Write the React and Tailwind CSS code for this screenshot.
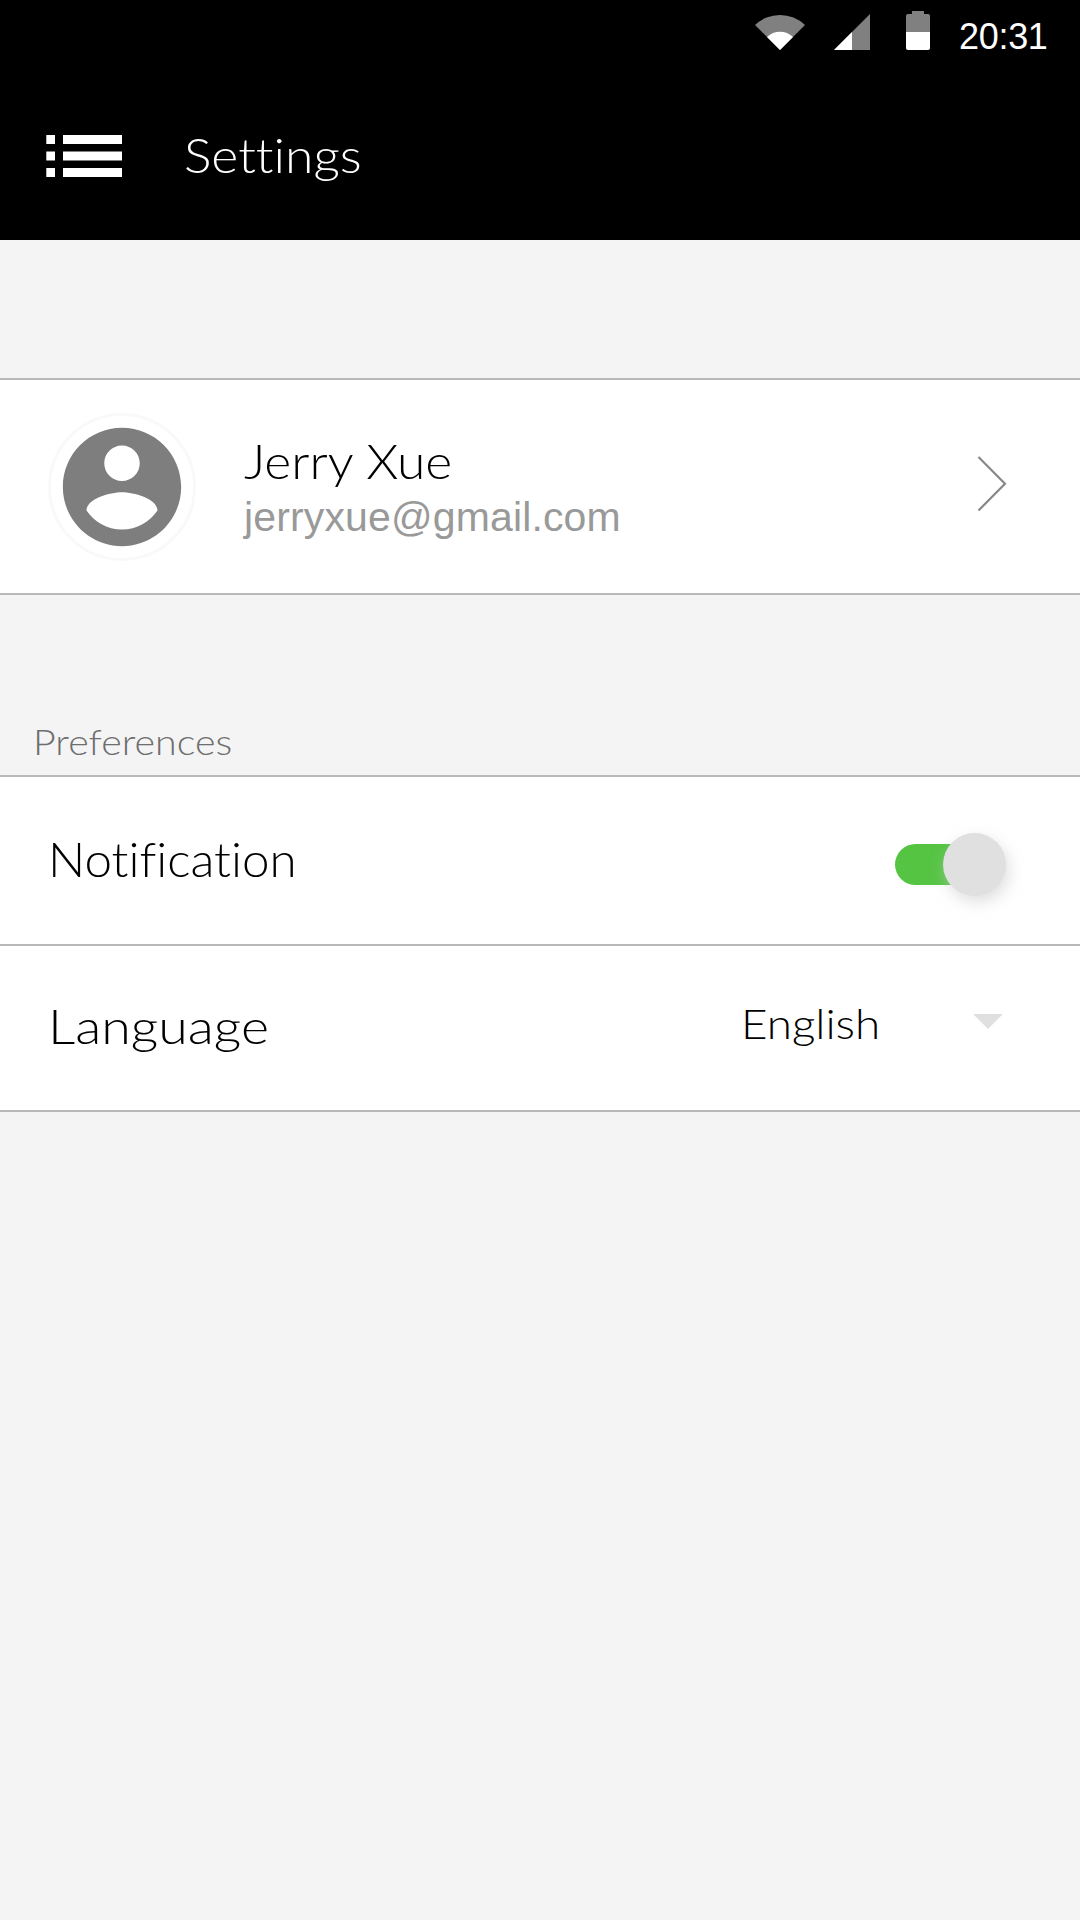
import React from "react";

function StatusBar() {
  return (
    <div className="flex h-[72px] items-start justify-end pr-[34px]">
      <svg className="mt-[14px] h-9 w-[50px]" viewBox="0 0 50 36">
        <path d="M25 36 L0 11 A36 36 0 0 1 50 11 Z" fill="#808080" />
        <path d="M25 36 L12 23 A19 19 0 0 1 38 23 Z" fill="#fff" />
      </svg>
      <svg className="mt-[14px] ml-[29px] h-9 w-9" viewBox="0 0 36 36">
        <path d="M36 0V36H0Z" fill="#808080" />
        <path d="M18 18V36H0Z" fill="#fff" />
      </svg>
      <svg className="mt-[11px] ml-9 h-[39px] w-6" viewBox="0 0 24 39">
        <path d="M6 0H18V3H22Q24 3 24 5V21H0V5Q0 3 2 3H6Z" fill="#808080" />
        <path d="M0 21H24V37Q24 39 22 39H2Q0 39 0 37Z" fill="#fff" />
      </svg>
      <span className="mt-4 ml-[29px] w-[87px] font-['Liberation_Sans',sans-serif] text-[36px] leading-[41px] tracking-[-0.3px] whitespace-nowrap text-white">
        20:31
      </span>
    </div>
  );
}

function Header() {
  return (
    <header className="h-60 bg-black">
      <StatusBar />
      <div className="flex items-start pl-[46px]">
        <svg className="mt-[63px] h-[42px] w-[76px]" viewBox="0 0 76 42" fill="#fff">
          <path d="M.3 0H9V9H.3ZM17 0H76V9H17ZM.3 16.5H9V25.5H.3ZM17 16.5H76V25.5H17ZM.3 33H9V42H.3ZM17 33H76V42H17Z" />
        </svg>
        <h1 className="mt-[54px] ml-[62px] origin-left scale-x-[1.075] text-[48px] leading-[58px] font-light text-white">
          Settings
        </h1>
      </div>
    </header>
  );
}

function Avatar() {
  return (
    <div className="mt-[33px] flex h-[148px] w-[148px] items-center justify-center rounded-full border-[3px] border-[#f9f9f9]">
      <svg className="h-[142px] w-[142px] shrink-0" viewBox="0 0 24 24" fill="#7e7e7e">
        <path d="M12 2C6.48 2 2 6.48 2 12s4.48 10 10 10 10-4.48 10-10S17.52 2 12 2zm0 3c1.66 0 3 1.34 3 3s-1.34 3-3 3-3-1.34-3-3 1.34-3 3-3zm0 14.2c-2.5 0-4.71-1.28-6-3.22.03-1.99 4-3.08 6-3.08 1.99 0 5.97 1.09 6 3.08-1.29 1.94-3.5 3.22-6 3.22z" />
      </svg>
    </div>
  );
}

export default function App() {
  return (
    <div className="h-[1920px] w-[1080px] overflow-hidden bg-[#f4f4f4] font-['Lato',sans-serif] text-black [font-variant-ligatures:none]">
      <Header />

      <section className="mt-[138px] flex h-[217px] items-start border-y-2 border-[#b9b9b9] bg-white pl-12">
        <Avatar />
        <div className="mt-[52px] ml-12 flex-1 whitespace-nowrap">
          <p className="origin-left scale-x-[1.075] text-[48px] leading-[58px] font-light">Jerry Xue</p>
          <p className="mt-[3px] font-['Liberation_Sans',sans-serif] text-[41px] leading-[48px] tracking-[0.14px] text-[#999]">
            jerryxue@gmail.com
          </p>
        </div>
        <svg className="mt-[75px] mr-[73px] h-[57px] w-[30px]" viewBox="0 0 30 57" fill="none" stroke="#888" strokeWidth="2.2">
          <path d="M1.5 2L28 28.7L1.5 55.5" />
        </svg>
      </section>

      <h2 className="mt-[125px] ml-[33px] h-[55px] origin-left scale-x-[1.094] text-[36px] leading-[43px] font-light text-[#6e6e6e]">
        Preferences
      </h2>

      <section className="border-y-2 border-[#b9b9b9] bg-white">
        <div className="flex h-[169px] items-start justify-between border-b-2 border-[#b9b9b9] pr-[74px] pl-12">
          <p className="mt-[53px] origin-left scale-x-[1.028] text-[48px] leading-[58px] font-light">Notification</p>
          <div className="mt-14 flex h-[63px] w-[111px] items-center justify-end">
            <div className="-mr-[43px] h-[41px] w-[91px] shrink-0 rounded-full bg-[#55c443]" />
            <div className="relative h-[63px] w-[63px] shrink-0 rounded-full bg-[#e0e0e0] shadow-[3px_6px_16px_rgba(200,200,200,0.6)]" />
          </div>
        </div>
        <div className="flex h-[164px] items-start pl-12">
          <p className="mt-[51px] w-[693px] origin-left scale-x-[1.12] text-[48px] leading-[58px] font-light">Language</p>
          <p className="mt-[52px] w-[232px] origin-left scale-x-[1.09] text-[42px] leading-[50px] font-light">English</p>
          <svg className="mt-[68px] h-[15px] w-[30px]" viewBox="0 0 30 15">
            <path d="M0 0H30L15 15Z" fill="#e0e0e0" />
          </svg>
        </div>
      </section>
    </div>
  );
}
